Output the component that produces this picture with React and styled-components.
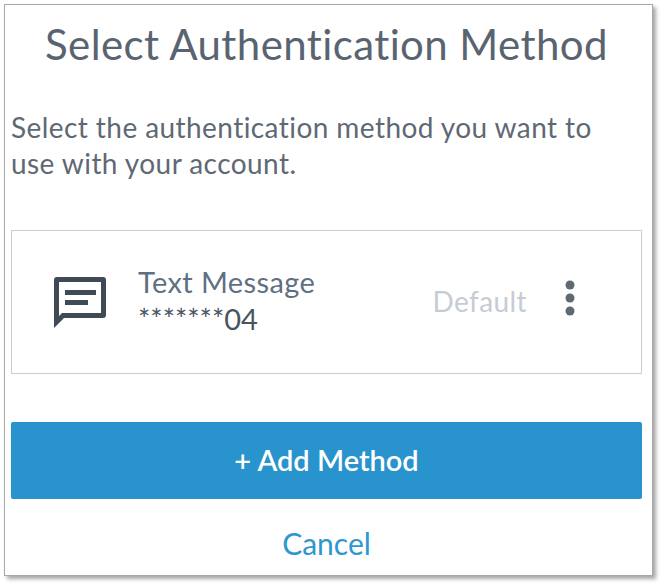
import React from "react";
import styled, { createGlobalStyle } from "styled-components";

const Global = createGlobalStyle`
  html, body { margin: 0; padding: 0; background: #fff; }
  body { font-family: Lato, "Open Sans", sans-serif; width: 665px; height: 588px; overflow: hidden; }
`;

const Page = styled.div`
  width: 665px;
  height: 588px;
  padding: 4px 12px 12px 4px;
  box-sizing: border-box;
`;

const Dialog = styled.div`
  width: 649px;
  height: 572px;
  box-sizing: border-box;
  background: #fff;
  border: 1px solid #a8a8a8;
  box-shadow: 3px 3px 4px #a6a6a6;
  padding: 0 10px 0 6px;
  display: flex;
  flex-direction: column;
`;

const Title = styled.h1`
  margin: 13px 0 0;
  font-size: 42px;
  line-height: 52px;
  font-weight: 400;
  letter-spacing: 0.4px;
  color: #5a6470;
  text-align: center;
  white-space: nowrap;
`;

const Intro = styled.p`
  margin: 39px 0 0;
  font-size: 28px;
  line-height: 36px;
  letter-spacing: 0.43px;
  color: #5f6974;
  white-space: nowrap;
`;

const MethodCard = styled.div`
  margin-top: 49px;
  height: 144px;
  box-sizing: border-box;
  border: 1.5px solid #c6d0da;
  display: flex;
  align-items: center;
  padding-left: 42px;
`;

const MessageIcon = styled.svg`
  width: 52px;
  height: 52px;
  flex: none;
  color: #3f4a54;
  margin-top: 2px;
`;

const MethodText = styled.div`
  margin-left: 32px;
  flex: 1;
  margin-top: -6px;
`;

const MethodName = styled.div`
  font-size: 29px;
  line-height: 39px;
  letter-spacing: 0.4px;
  color: #5f7083;
`;

const MethodValue = styled.div`
  font-size: 29px;
  line-height: 36px;
  color: #49545f;
`;

const DefaultLabel = styled.span`
  font-size: 28px;
  letter-spacing: 0.4px;
  color: #c6ccd3;
  margin-top: -2px;
`;

const KebabIcon = styled.svg`
  width: 12px;
  height: 36px;
  margin: -8px 65px 0 37px;
  flex: none;
  color: #5f6972;
`;

const AddButton = styled.button`
  margin-top: 48px;
  height: 77px;
  padding: 0 0 3px;
  border: 0;
  border-radius: 2px;
  background: #2893cc;
  color: #fff;
  font-family: inherit;
  font-size: 29px;
  font-weight: 600;
  cursor: pointer;
`;

const CancelLink = styled.a`
  margin-top: 26px;
  text-align: center;
  font-size: 30px;
  line-height: 36px;
  color: #2e97cf;
`;

export default function App() {
  return (
    <Page>
      <Global />
      <Dialog>
        <Title>Select Authentication Method</Title>
        <Intro>
          Select the authentication method you want to
          <br />
          use with your account.
        </Intro>
        <MethodCard>
          <MessageIcon viewBox="0 0 52 52" fill="none">
            <path
              fill="currentColor"
              fillRule="evenodd"
              d="M3 0H49a3 3 0 0 1 3 3V38a3 3 0 0 1-3 3H10L0 51V3a3 3 0 0 1 3-3ZM5 5V39L8 36H47V5Z"
            />
            <rect x="11" y="13" width="31" height="5" fill="currentColor" />
            <rect x="11" y="23" width="23" height="5" fill="currentColor" />
          </MessageIcon>
          <MethodText>
            <MethodName>Text Message</MethodName>
            <MethodValue>*******04</MethodValue>
          </MethodText>
          <DefaultLabel>Default</DefaultLabel>
          <KebabIcon viewBox="0 0 12 36" fill="currentColor">
            <circle cx="6" cy="5" r="4.5" />
            <circle cx="6" cy="18" r="4.5" />
            <circle cx="6" cy="31" r="4.5" />
          </KebabIcon>
        </MethodCard>
        <AddButton>+ Add Method</AddButton>
        <CancelLink>Cancel</CancelLink>
      </Dialog>
    </Page>
  );
}
